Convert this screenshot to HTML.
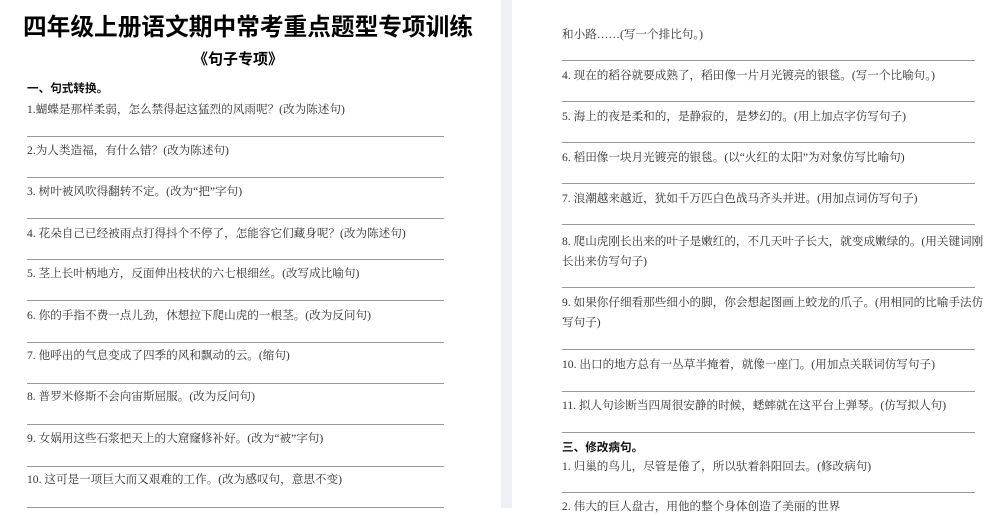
<!DOCTYPE html>
<html><head><meta charset="utf-8"><style>
body{margin:0;width:1007px;height:508px;overflow:hidden;background:#fff;position:relative;font-family:"Liberation Serif","Noto Serif CJK SC",serif;color:#333;}
.t{position:absolute;font-size:11.6px;line-height:16px;white-space:nowrap;}
.l{position:absolute;height:1px;background:#999;}
.L{left:27px;width:417px}
.R{left:562px;width:413px}
.h{font-family:"Liberation Sans","Noto Sans CJK SC",sans-serif;font-weight:bold;color:#111;}
#gap{position:absolute;left:501px;top:0;width:11px;height:508px;background:#eef0f5;}
</style></head><body>
<div id="gap"></div>
<div class="t h" style="left:22px;width:452px;text-align:center;top:13px;font-size:23.7px;line-height:30px;color:#000">四年级上册语文期中常考重点题型专项训练</div>
<div class="t h" style="left:0;width:476px;text-align:center;top:50px;font-size:15px;line-height:20px;color:#000">《句子专项》</div>
<div class="t h" style="left:27px;top:81px;">一、句式转换。</div>
<div class="t" style="left:27px;top:102px;">1.蝴蝶是那样柔弱，怎么禁得起这猛烈的风雨呢？(改为陈述句)</div>
<div class="l L" style="top:136px"></div>
<div class="t" style="left:27px;top:143px;">2.为人类造福，有什么错？(改为陈述句)</div>
<div class="l L" style="top:177px"></div>
<div class="t" style="left:27px;top:184px;">3. 树叶被风吹得翻转不定。(改为“把”字句)</div>
<div class="l L" style="top:218px"></div>
<div class="t" style="left:27px;top:226px;">4. 花朵自己已经被雨点打得抖个不停了，怎能容它们藏身呢？(改为陈述句)</div>
<div class="l L" style="top:259px"></div>
<div class="t" style="left:27px;top:266px;">5. 茎上长叶柄地方，反面伸出枝状的六七根细丝。(改写成比喻句)</div>
<div class="l L" style="top:300px"></div>
<div class="t" style="left:27px;top:308px;">6. 你的手指不费一点儿劲，休想拉下爬山虎的一根茎。(改为反问句)</div>
<div class="l L" style="top:342px"></div>
<div class="t" style="left:27px;top:348px;">7. 他呼出的气息变成了四季的风和飘动的云。(缩句)</div>
<div class="l L" style="top:383px"></div>
<div class="t" style="left:27px;top:389px;">8. 普罗米修斯不会向宙斯屈服。(改为反问句)</div>
<div class="l L" style="top:424px"></div>
<div class="t" style="left:27px;top:431px;">9. 女娲用这些石浆把天上的大窟窿修补好。(改为“被”字句)</div>
<div class="l L" style="top:466px"></div>
<div class="t" style="left:27px;top:472px;">10. 这可是一项巨大而又艰难的工作。(改为感叹句，意思不变)</div>
<div class="l L" style="top:507px"></div>

<div class="t" style="left:562px;top:27px;">和小路……(写一个排比句。)</div>
<div class="l R" style="top:60px"></div>
<div class="t" style="left:562px;top:68px;">4. 现在的稻谷就要成熟了，稻田像一片月光镀亮的银毯。(写一个比喻句。)</div>
<div class="l R" style="top:101px"></div>
<div class="t" style="left:562px;top:109px;">5. 海上的夜是柔和的，是静寂的，是梦幻的。(用上加点字仿写句子)</div>
<div class="l R" style="top:142px"></div>
<div class="t" style="left:562px;top:150px;">6. 稻田像一块月光镀亮的银毯。(以“火红的太阳”为对象仿写比喻句)</div>
<div class="l R" style="top:183px"></div>
<div class="t" style="left:562px;top:191px;">7. 浪潮越来越近，犹如千万匹白色战马齐头并进。(用加点词仿写句子)</div>
<div class="l R" style="top:224px"></div>
<div class="t" style="left:562px;top:234px;">8. 爬山虎刚长出来的叶子是嫩红的，不几天叶子长大，就变成嫩绿的。(用关键词刚</div>
<div class="t" style="left:562px;top:254px;">长出来仿写句子)</div>
<div class="l R" style="top:287px"></div>
<div class="t" style="left:562px;top:295px;">9. 如果你仔细看那些细小的脚，你会想起图画上蛟龙的爪子。(用相同的比喻手法仿</div>
<div class="t" style="left:562px;top:315px;">写句子)</div>
<div class="l R" style="top:349px"></div>
<div class="t" style="left:562px;top:357px;">10. 出口的地方总有一丛草半掩着，就像一座门。(用加点关联词仿写句子)</div>
<div class="l R" style="top:391px"></div>
<div class="t" style="left:562px;top:398px;">11. 拟人句诊断当四周很安静的时候，蟋蟀就在这平台上弹琴。(仿写拟人句)</div>
<div class="l R" style="top:432px"></div>
<div class="t h" style="left:562px;top:440px;">三、修改病句。</div>
<div class="t" style="left:562px;top:459px;">1. 归巢的鸟儿，尽管是倦了，所以驮着斜阳回去。(修改病句)</div>
<div class="l R" style="top:492px"></div>
<div class="t" style="left:562px;top:499px;">2. 伟大的巨人盘古，用他的整个身体创造了美丽的世界</div>
</body></html>
